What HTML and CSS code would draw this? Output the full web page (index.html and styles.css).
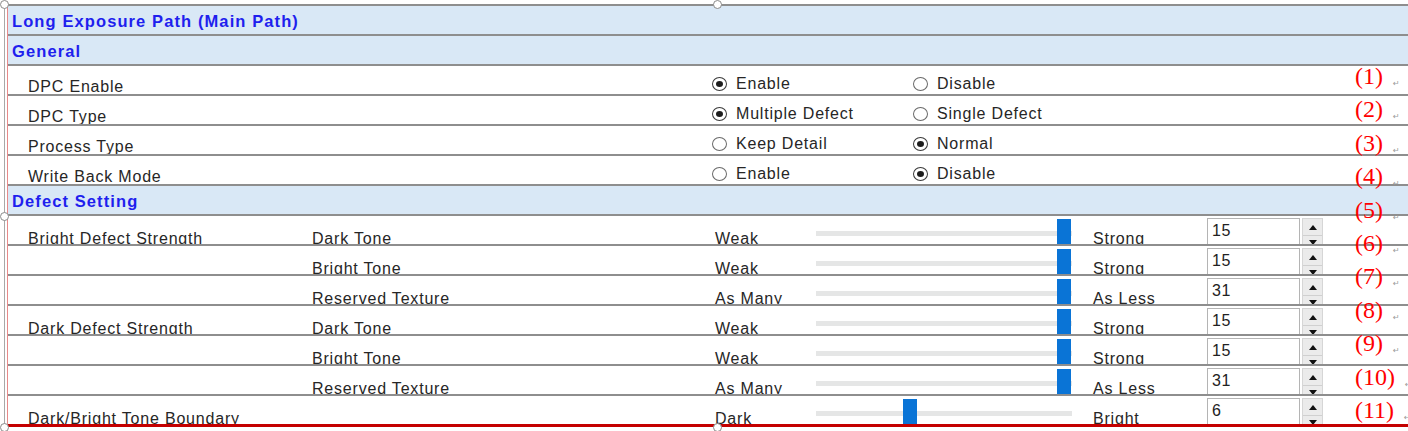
FILE: index.html
```html
<!DOCTYPE html>
<html lang="en">
<head>
    <meta charset="UTF-8">
    <title>Long Exposure Path</title>
    <link rel="stylesheet" href="styles.css">
</head>
<body>
    <div class="sheet">
        <div class="frame">
            <div class="inner">
                <div class="title">Long Exposure Path (Main Path)</div>
                <div class="title">General</div>

                <div class="row opt">
                    <span class="label">DPC Enable</span>
                    <span></span>
                    <span class="radio"><span class="dot on"></span>Enable</span>
                    <span class="radio"><span class="dot"></span>Disable</span>
                </div>
                <div class="row opt">
                    <span class="label">DPC Type</span>
                    <span></span>
                    <span class="radio"><span class="dot on"></span>Multiple Defect</span>
                    <span class="radio"><span class="dot"></span>Single Defect</span>
                </div>
                <div class="row opt">
                    <span class="label">Process Type</span>
                    <span></span>
                    <span class="radio"><span class="dot"></span>Keep Detail</span>
                    <span class="radio"><span class="dot on"></span>Normal</span>
                </div>
                <div class="row opt">
                    <span class="label">Write Back Mode</span>
                    <span></span>
                    <span class="radio"><span class="dot"></span>Enable</span>
                    <span class="radio"><span class="dot on"></span>Disable</span>
                </div>

                <div class="title">Defect Setting</div>

                <div class="row level">
                    <span class="label">Bright Defect Strength</span>
                    <span class="label">Dark Tone</span>
                    <span class="low">Weak</span>
                    <div class="slider"><span class="thumb" style="margin-left: 241px"></span></div>
                    <span class="high">Strong</span>
                    <div class="spin"><span class="value">15</span><span class="arrows"><span class="up"></span><span class="down"></span></span></div>
                </div>
                <div class="row level">
                    <span class="label"></span>
                    <span class="label">Bright Tone</span>
                    <span class="low">Weak</span>
                    <div class="slider"><span class="thumb" style="margin-left: 241px"></span></div>
                    <span class="high">Strong</span>
                    <div class="spin"><span class="value">15</span><span class="arrows"><span class="up"></span><span class="down"></span></span></div>
                </div>
                <div class="row level">
                    <span class="label"></span>
                    <span class="label">Reserved Texture</span>
                    <span class="low">As Many</span>
                    <div class="slider"><span class="thumb" style="margin-left: 241px"></span></div>
                    <span class="high">As Less</span>
                    <div class="spin"><span class="value">31</span><span class="arrows"><span class="up"></span><span class="down"></span></span></div>
                </div>
                <div class="row level">
                    <span class="label">Dark Defect Strength</span>
                    <span class="label">Dark Tone</span>
                    <span class="low">Weak</span>
                    <div class="slider"><span class="thumb" style="margin-left: 241px"></span></div>
                    <span class="high">Strong</span>
                    <div class="spin"><span class="value">15</span><span class="arrows"><span class="up"></span><span class="down"></span></span></div>
                </div>
                <div class="row level">
                    <span class="label"></span>
                    <span class="label">Bright Tone</span>
                    <span class="low">Weak</span>
                    <div class="slider"><span class="thumb" style="margin-left: 241px"></span></div>
                    <span class="high">Strong</span>
                    <div class="spin"><span class="value">15</span><span class="arrows"><span class="up"></span><span class="down"></span></span></div>
                </div>
                <div class="row level">
                    <span class="label"></span>
                    <span class="label">Reserved Texture</span>
                    <span class="low">As Many</span>
                    <div class="slider"><span class="thumb" style="margin-left: 241px"></span></div>
                    <span class="high">As Less</span>
                    <div class="spin"><span class="value">31</span><span class="arrows"><span class="up"></span><span class="down"></span></span></div>
                </div>
                <div class="row level last">
                    <span class="label">Dark/Bright Tone Boundary</span>
                    <span class="label"></span>
                    <span class="low">Dark</span>
                    <div class="slider"><span class="thumb" style="margin-left: 87px"></span></div>
                    <span class="high">Bright</span>
                    <div class="spin"><span class="value">6</span><span class="arrows"><span class="up"></span><span class="down"></span></span></div>
                </div>
            </div>
        </div>

        <!-- item numbers typed over the picture -->
        <div class="notes">
            <div>(1)<span class="ret">↵</span></div>
            <div>(2)<span class="ret">↵</span></div>
            <div>(3)<span class="ret">↵</span></div>
            <div>(4)<span class="ret">↵</span></div>
            <div>(5)<span class="ret">↵</span></div>
            <div>(6)<span class="ret">↵</span></div>
            <div>(7)<span class="ret">↵</span></div>
            <div>(8)<span class="ret">↵</span></div>
            <div>(9)<span class="ret">↵</span></div>
            <div>(10)<span class="ret">↵</span></div>
            <div>(11)<span class="ret">↵</span></div>
        </div>

        <!-- picture selection handles -->
        <span class="handle h-tl"></span>
        <span class="handle h-tm"></span>
        <span class="handle h-ml"></span>
        <span class="handle h-bl"></span>
        <span class="handle h-bm"></span>
    </div>
</body>
</html>
```

FILE: styles.css
```css
body {
    margin: 0;
    padding: 0;
    background: #fff;
    overflow: hidden;
    font-family: "Liberation Sans", Arial, sans-serif;
    color: #262626;
}
.sheet {
    position: relative;
    width: 1408px;
    height: 431px;
    overflow: hidden;
}
.frame {
    margin: 4px 0 0 4px;
    width: 1420px;
    border-top: 2px solid #8e8e8e;
    border-left: 1px solid #a8a8a8;
    padding-left: 2px;
}
.inner {
    border-left: 1px solid #e88a8a;
}
.title {
    height: 28px;
    line-height: 30px;
    padding-left: 4px;
    background: #d9e8f6;
    border-bottom: 2px solid #8e8e8e;
    color: #1f1fee;
    font-size: 16.5px;
    font-weight: bold;
    letter-spacing: 1.1px;
    overflow: hidden;
}
.row {
    display: grid;
    height: 28px;
    padding-left: 20px;
    border-bottom: 2px solid #8e8e8e;
    overflow: hidden;
    align-items: end;
    font-size: 16px;
    letter-spacing: 0.8px;
}
.row.last {
    border-bottom: 3px solid #c40000;
}
.opt {
    grid-template-columns: 284px 400px 201px auto;
}
.level {
    grid-template-columns: 284px 400px 104px 256px 135px 116px;
}
.label {
    line-height: 14px;
    white-space: nowrap;
}
.radio {
    display: flex;
    align-items: center;
    line-height: 18px;
    padding-bottom: 1px;
    white-space: nowrap;
}
.dot {
    width: 13px;
    height: 12px;
    border: 1px solid #6a6a6a;
    border-radius: 50%;
    margin-right: 9px;
    display: flex;
    align-items: center;
    justify-content: center;
}
.dot.on {
    border-color: #3a3a3a;
}
.dot.on::after {
    content: "";
    width: 7px;
    height: 6px;
    border-radius: 50%;
    background: #1c1c1c;
}
.low {
    line-height: 14px;
    padding-left: 3px;
    white-space: nowrap;
}
.high {
    line-height: 14px;
    padding-left: 21px;
    white-space: nowrap;
}
.slider {
    align-self: stretch;
    display: flex;
    background: linear-gradient(#fff 15px, #e5e6e6 15px, #e5e6e6 20px, #fff 20px);
}
.thumb {
    width: 14px;
    height: 26px;
    margin-top: 3px;
    background: #0a74d6;
}
.spin {
    align-self: start;
    display: flex;
    margin-top: 2px;
    height: 28px;
}
.value {
    width: 88px;
    height: 26px;
    padding-left: 4px;
    border: 1px solid #b4b4b4;
    line-height: 24px;
    color: #222;
    letter-spacing: 0.5px;
}
.arrows {
    width: 19px;
    margin-left: 2px;
    border: 1px solid #d6d6d6;
    background: #ebebeb;
    display: flex;
    flex-direction: column;
}
.up {
    height: 17px;
    border-bottom: 1px solid #d0d0d0;
    display: flex;
    align-items: center;
    justify-content: center;
}
.up::after {
    content: "";
    border-left: 4px solid transparent;
    border-right: 4px solid transparent;
    border-bottom: 5px solid #111;
}
.down {
    display: flex;
    justify-content: center;
    padding-top: 4px;
}
.down::after {
    content: "";
    border-left: 4px solid transparent;
    border-right: 4px solid transparent;
    border-top: 5px solid #111;
}
.notes {
    position: absolute;
    left: 1355px;
    top: 60px;
    font-family: "Liberation Serif", "Times New Roman", serif;
    font-size: 24px;
    line-height: 33.4px;
    color: #f00;
    white-space: nowrap;
}
.notes div {
    height: 33.4px;
}
.ret {
    margin-left: 10px;
    font-family: "DejaVu Sans", sans-serif;
    font-size: 8px;
    line-height: 0;
    color: #9a9a9a;
    vertical-align: -2px;
}
.handle {
    position: absolute;
    width: 7px;
    height: 7px;
    border: 1.5px solid #8a8a8a;
    border-radius: 50%;
    background: #fff;
}
.h-tl { left: 0px; top: 0px; }
.h-tm { left: 713px; top: 0px; }
.h-ml { left: 0px; top: 212px; }
.h-bl { left: 0px; top: 423px; }
.h-bm { left: 713px; top: 423px; }
```
